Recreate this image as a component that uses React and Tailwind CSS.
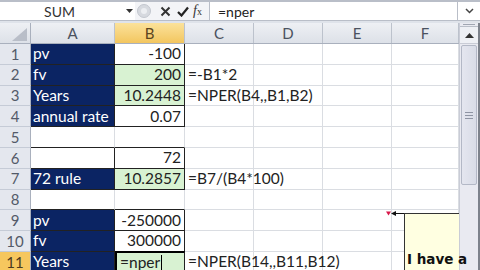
import React from "react";

const NAVY = "bg-[#0b2463]";
const GREEN = "bg-[#d8f2d2]";

const rows = [
  { n: 1, a: "pv", aNavy: true, b: "-100", box: true },
  { n: 2, a: "fv", aNavy: true, b: "200", bGreen: true, c: "=-B1*2", box: true },
  { n: 3, a: "Years", aNavy: true, b: "10.2448", bGreen: true, c: "=NPER(B4,,B1,B2)", box: true },
  { n: 4, a: "annual rate", aNavy: true, b: "0.07", box: true },
  { n: 5, nextBox: true },
  { n: 6, b: "72", box: true },
  { n: 7, a: "72 rule", aNavy: true, b: "10.2857", bGreen: true, c: "=B7/(B4*100)", box: true },
  { n: 8, nextBox: true },
  { n: 9, a: "pv", aNavy: true, b: "-250000", box: true },
  { n: 10, a: "fv", aNavy: true, b: "300000", box: true },
  { n: 11, a: "Years", aNavy: true, b: "=nper", bGreen: true, edit: true, c: "=NPER(B14,,B11,B12)", box: true, sel: true },
];

const cols = [
  { k: "A", w: "w-[84px]" },
  { k: "B", w: "w-[70px]" },
  { k: "C", w: "w-[69px]" },
  { k: "D", w: "w-[69px]" },
  { k: "E", w: "w-[69px]" },
  { k: "F", w: "w-[67px]" },
];

function Row({ r }) {
  const boxB = r.box || r.nextBox ? "border-b-[#222]" : "border-b-[#dadde2]";
  return (
    <div className="flex h-[20.8px] shrink-0">
      <div
        className={`w-[31px] shrink-0 flex items-center justify-center border-r border-b border-r-[#a9b0bd] border-b-[#c5cbd6] text-[15px] ${
          r.sel ? "bg-[#f6c75e] text-[#4a3a20]" : "bg-[#e4e7ee] text-[#535a68]"
        }`}
      >
        {r.n}
      </div>
      <div
        className={`w-[84px] shrink-0 flex items-center pl-[2px] border-r border-b ${boxB} ${
          r.box ? "border-r-[#222]" : "border-r-[#dadde2]"
        } ${r.aNavy ? NAVY + " text-white" : "bg-white"} text-[15.5px] leading-none whitespace-nowrap`}
      >
        {r.a}
      </div>
      <div
        className={`w-[70px] shrink-0 flex items-center border-r border-b ${boxB} ${
          r.box ? "border-r-[#222]" : "border-r-[#dadde2]"
        } ${r.bGreen ? GREEN : "bg-white"} ${
          r.edit ? "justify-start pl-[3px] border-t-2 border-t-black -mt-[1px] border-l-2 border-l-black" : "justify-end pr-[3px]"
        } text-[15.5px] leading-none text-[#222] whitespace-nowrap`}
      >
        {r.b}
        {r.edit && <span className="inline-block w-[1px] h-[15px] bg-black ml-[1px]" />}
      </div>
      <div className="w-[69px] shrink-0 flex items-center pl-[3px] border-r border-b border-[#dadde2] bg-white text-[15.5px] leading-none text-[#222] whitespace-nowrap overflow-visible relative z-10">
        {r.c}
      </div>
      <div className="w-[69px] shrink-0 border-r border-b border-[#dadde2]" />
      <div className="w-[69px] shrink-0 border-r border-b border-[#dadde2]" />
      <div className="w-[67px] shrink-0 border-r border-b border-[#dadde2]" />
    </div>
  );
}

export default function App() {
  return (
    <div
      className="w-[480px] h-[270px] overflow-hidden bg-[#dfe3ea] flex flex-col relative"
      style={{ fontFamily: "Lato, 'Open Sans', sans-serif" }}
    >
      {/* top strip */}
      <div className="h-[2px] bg-[#b9bec8] shrink-0" />
      {/* formula bar */}
      <div className="h-[19px] flex shrink-0 bg-[#e6e9ef]">
        <div className="w-[123px] bg-white flex items-center justify-center pr-[4px] border-b border-[#b9bec8] text-[14px] text-[#333]">
          SUM
        </div>
        <div className="w-[12px] bg-white flex items-center justify-center border-b border-[#b9bec8]">
          <svg width="7" height="4" viewBox="0 0 7 4"><path d="M0 0h7L3.5 4z" fill="#333" /></svg>
        </div>
        <div className="w-[74px] flex items-center bg-[#f3f4f7] border-b border-[#b9bec8]">
          <div className="ml-[2px] w-[14px] h-[14px] rounded-full bg-[#d6d9df] border border-[#c3c7cf] flex items-center justify-center">
            <div className="w-[6px] h-[6px] rounded-full bg-[#eceef2]" />
          </div>
          <svg className="ml-[9px]" width="11" height="11" viewBox="0 0 11 11">
            <path d="M1.5 1.5l8 8M9.5 1.5l-8 8" stroke="#333" strokeWidth="2" />
          </svg>
          <svg className="ml-[6px]" width="12" height="11" viewBox="0 0 12 11">
            <path d="M1 6l3.5 3.5L11 1.5" stroke="#222" strokeWidth="2.2" fill="none" />
          </svg>
          <span className="ml-[4px] italic text-[14px] text-[#333] leading-none" style={{ fontFamily: "'Liberation Serif', serif" }}>
            f<span className="text-[10px] not-italic">x</span>
          </span>
        </div>
        <div className="w-[248px] bg-white flex items-center pl-[8px] border-b border-l border-[#b9bec8] text-[14px] text-[#222]">
          =nper
        </div>
        <div className="flex-1 bg-white border-b border-l border-[#b9bec8] flex items-center justify-center">
          <svg width="9" height="6" viewBox="0 0 9 6"><path d="M1 1l3.5 3.5L8 1" stroke="#444" strokeWidth="1.5" fill="none" /></svg>
        </div>
      </div>
      <div className="h-[2px] bg-[#dfe3ea] shrink-0" />
      {/* grid + scrollbar */}
      <div className="flex flex-1 min-h-0">
        <div className="flex flex-col w-[459px] shrink-0 bg-white">
          {/* header row */}
          <div className="flex h-[21px] shrink-0 bg-gradient-to-b from-[#eef0f4] to-[#dde1e8] border-b border-[#a9b0bd]">
            <div className="w-[31px] shrink-0 border-r border-[#a9b0bd] flex items-end justify-end pr-[3px] pb-[2px]">
              <svg width="15" height="13" viewBox="0 0 15 13"><path d="M15 0v13H0z" fill="#b9bec8" /></svg>
            </div>
            {cols.map((c) => (
              <div
                key={c.k}
                className={`${c.w} shrink-0 border-r border-[#bcc2cc] flex items-center justify-center text-[15px] ${
                  c.k === "B" ? "bg-gradient-to-b from-[#fbe29a] to-[#f3c65e] text-[#5b4520]" : "text-[#4b5260]"
                }`}
              >
                {c.k}
              </div>
            ))}
          </div>
          {rows.map((r) => (
            <Row key={r.n} r={r} />
          ))}
        </div>
        {/* scrollbar */}
        <div className="w-[19px] shrink-0 flex flex-col bg-[#e9eaf1] border-l border-[#c9ccd6]">
          <div className="h-[4px] border-b border-[#b9bec8] flex items-center justify-center">
            <div className="w-[12px] h-[1px] bg-[#a0a6b2]" />
          </div>
          <div className="h-[17px] flex items-center justify-center border-b border-[#c9ccd6] bg-[#eef0f5]">
            <svg width="9" height="5" viewBox="0 0 9 5"><path d="M0 5L4.5 0 9 5z" fill="#333" /></svg>
          </div>
          <div className="mt-[1px] mx-[1px] h-[140px] bg-gradient-to-r from-[#e4e6ef] to-[#d9dce7] border border-[#b3b8c6] rounded-[2px] flex items-center justify-center">
            <div className="flex flex-col gap-[2px]">
              <div className="w-[8px] h-[1px] bg-[#8e94a3]" />
              <div className="w-[8px] h-[1px] bg-[#8e94a3]" />
              <div className="w-[8px] h-[1px] bg-[#8e94a3]" />
            </div>
          </div>
        </div>
        <div className="w-[2px] shrink-0 bg-[#7d828c]" />
      </div>

      {/* comment indicator + arrow */}
      <svg className="absolute left-[384px] top-[211px]" width="22" height="8" viewBox="0 0 22 8">
        <path d="M2 0.5h5l-2.5 4z" fill="#d8184a" />
        <path d="M8 2.5h14" stroke="#111" strokeWidth="1" />
        <path d="M7 2.5l5-2.5v5z" fill="#111" />
      </svg>
      {/* comment box */}
      <div className="absolute left-[404px] top-[213px] w-[55px] h-[60px] bg-[#ffffe1] border-l border-t border-[#333] pl-[2px] pt-[37px]">
        <div
          className="font-bold text-[13.5px] leading-[16px] text-[#111] whitespace-nowrap"
          style={{ fontFamily: "'DejaVu Sans', sans-serif" }}
        >
          I have a
          <br />
          7.20%
        </div>
      </div>
    </div>
  );
}
